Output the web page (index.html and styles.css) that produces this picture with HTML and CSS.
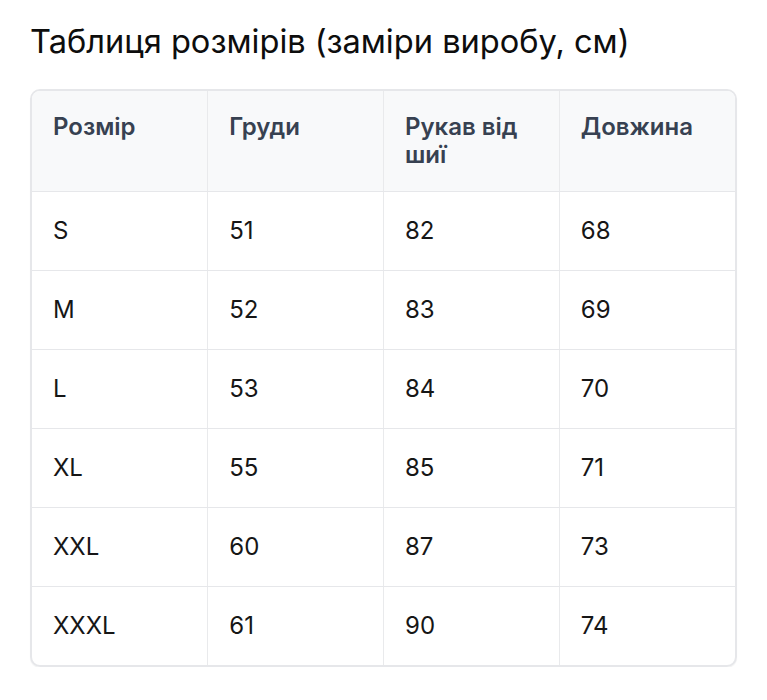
FILE: index.html
```html
<!DOCTYPE html>
<html lang="uk">
<head>
<meta charset="utf-8">
<link rel="stylesheet" href="styles.css">
</head>
<body>
<h1 class="title">Таблиця розмірів (заміри виробу, см)</h1>
<div class="table-wrap">
<table class="sizes">
<thead>
<tr><th>Розмір</th><th>Груди</th><th>Рукав від шиї</th><th>Довжина</th></tr>
</thead>
<tbody>
<tr><td>S</td><td>51</td><td>82</td><td>68</td></tr>
<tr><td>M</td><td>52</td><td>83</td><td>69</td></tr>
<tr><td>L</td><td>53</td><td>84</td><td>70</td></tr>
<tr><td>XL</td><td>55</td><td>85</td><td>71</td></tr>
<tr><td>XXL</td><td>60</td><td>87</td><td>73</td></tr>
<tr><td>XXXL</td><td>61</td><td>90</td><td>74</td></tr>
</tbody>
</table>
</div>
</body>
</html>
```
FILE: styles.css
```css
html, body { margin: 0; padding: 0; background: #fff; }
body {
  font-family: Inter, "Noto Sans", sans-serif;
  color: #111;
  padding: 21px 30px 0 30px;
}
.title {
  margin: 0 0 28px 0;
  font-size: 32.6px;
  font-weight: 400;
  line-height: 40px;
  color: #0d0d0d;
}
.table-wrap {
  width: 703px;
  border: 2px solid #e6e7ea;
  border-radius: 10px;
  overflow: hidden;
  box-shadow: 0 1px 1px rgba(0,0,0,0.06);
}
.sizes {
  width: 100%;
  border-collapse: collapse;
  table-layout: fixed;
  font-size: 24px;
  line-height: 28px;
}
.sizes th, .sizes td {
  text-align: left;
  vertical-align: top;
  border-right: 1px solid #e9eaec;
  border-bottom: 1px solid #e6e7ea;
}
.sizes th:last-child, .sizes td:last-child { border-right: none; }
.sizes tbody tr:last-child td { border-bottom: none; }
.sizes th {
  background: #f8f9fa;
  font-weight: 600;
  color: #374151;
  padding: 22px 22px 22px 21px;
}
.sizes td {
  padding: 25px 22px 25px 21px;
  color: #161616;
}
```
